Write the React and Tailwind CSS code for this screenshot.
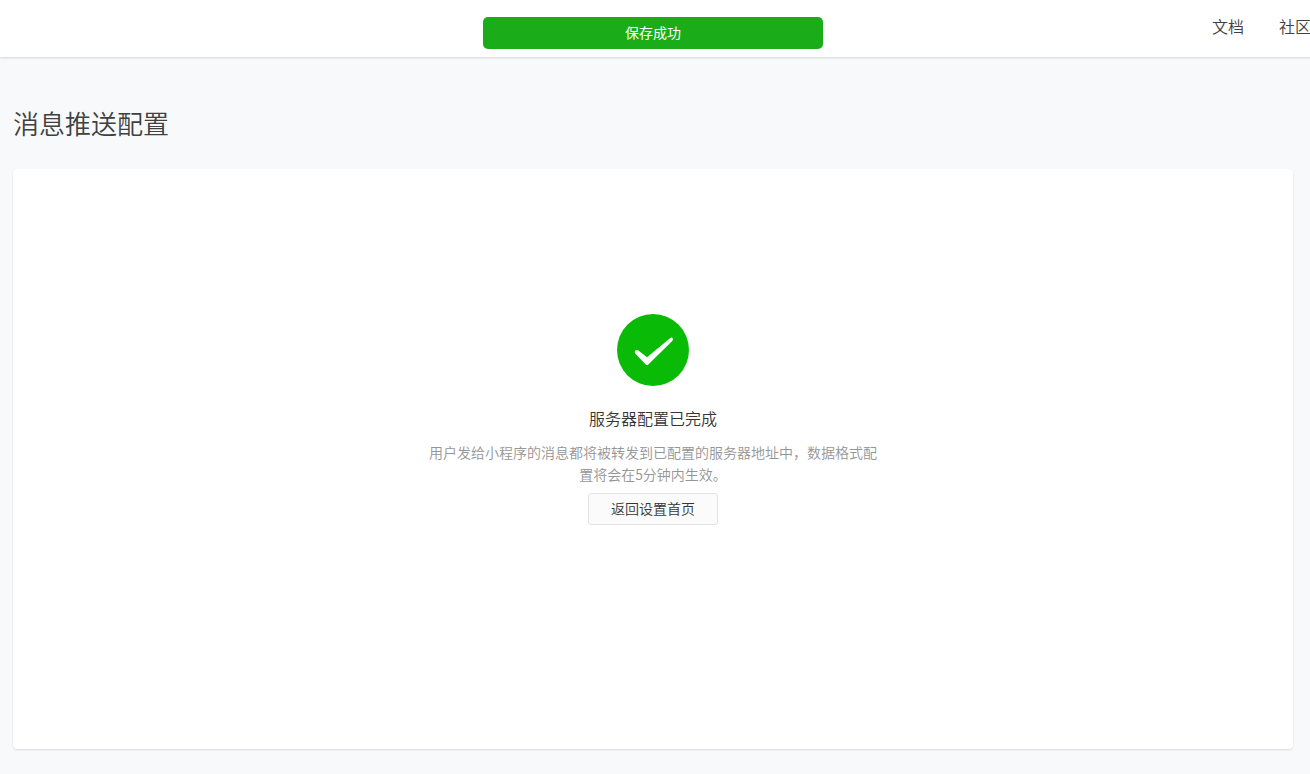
function SuccessIcon() {
  return (
    <svg className="size-[72px]" viewBox="0 0 72 72" aria-hidden="true">
      <circle cx="36" cy="36" r="36" fill="#09bb07" />
      <path
        d="M18.2 39.6 Q17.1 38 18.4 36.6 Q19.8 35.3 21.4 36.5 L30 43.2 L53 24.2 Q54.5 23.1 55.6 24.1 Q56.6 25.3 55.5 26.7 L31.3 50.5 Q30 51.7 28.7 50.5 Z"
        fill="#fff"
      />
    </svg>
  );
}

function Toast({ children }) {
  return (
    <div className="pointer-events-none absolute inset-x-0 top-[17px] flex justify-center pl-[13px] pr-[17px]">
      <div
        role="status"
        className="h-8 w-[340px] rounded-[5px] bg-[#1aad19] text-center text-sm leading-[30px] text-white"
      >
        {children}
      </div>
    </div>
  );
}

export default function App() {
  return (
    <div className="relative min-h-screen overflow-hidden bg-[#f8f9fb] font-['Noto_Sans_CJK_SC',sans-serif] text-[#353535]">
      <header className="-mr-px flex h-[57px] justify-end bg-white pt-[15px] shadow-[0_1px_2px_rgba(0,0,0,0.15)]">
        <nav className="flex gap-[35px] text-base leading-[22px] font-[350] text-[#404040]">
          <a href="#docs">文档</a>
          <a href="#community">社区</a>
        </nav>
      </header>
      <Toast>保存成功</Toast>
      <main className="pt-[46px] pb-6 pl-[13px] pr-[17px]">
        <h1 className="text-[26px] leading-10 font-[350] text-[#404040]">消息推送配置</h1>
        <section className="mt-[26px] flex flex-col items-center rounded bg-white pt-[145px] pb-56 shadow-[0_1px_2px_rgba(0,0,0,0.12)]">
          <SuccessIcon />
          <h2 className="mt-5 text-base leading-6 font-[350]">服务器配置已完成</h2>
          <p className="mt-[11px] w-[450px] text-center text-sm leading-[22px] font-[350] text-[#959595]">
            用户发给小程序的消息都将被转发到已配置的服务器地址中，数据格式配置将会在5分钟内生效。
          </p>
          <button
            type="button"
            className="mt-2 h-8 w-[130px] rounded-[3px] border border-[#e4e4e4] bg-[#fbfbfb] pb-0.5 text-sm font-[350]"
          >
            返回设置首页
          </button>
        </section>
      </main>
    </div>
  );
}
